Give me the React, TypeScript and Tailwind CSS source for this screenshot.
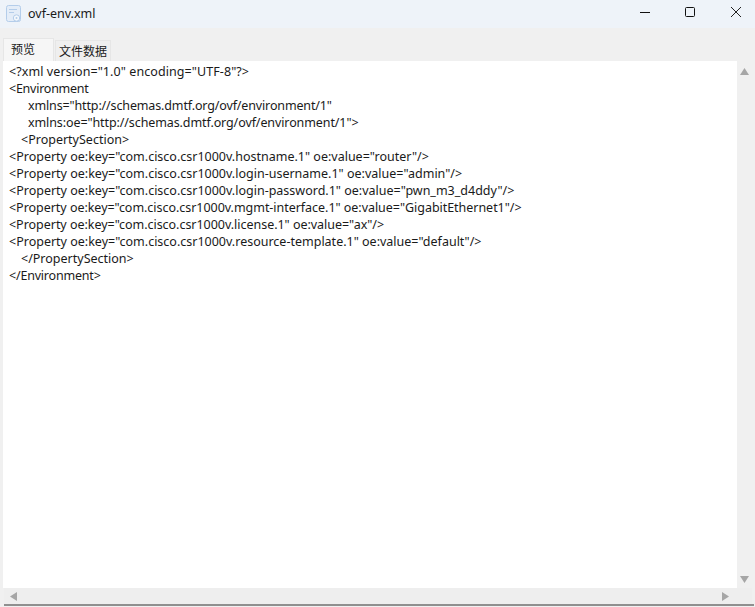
import React from "react";

const lines: [string, string][] = [
  ["tracking-[0.08px]", '<?xml version="1.0" encoding="UTF-8"?>'],
  ["tracking-[-0.25px]", "<Environment"],
  ["pl-[19px] tracking-[-0.14px]", 'xmlns="http://schemas.dmtf.org/ovf/environment/1"'],
  ["pl-[19px] tracking-[-0.1px]", 'xmlns:oe="http://schemas.dmtf.org/ovf/environment/1">'],
  ["pl-[12px]", "<PropertySection>"],
  ["", '<Property oe:key="com.cisco.csr1000v.hostname.1" oe:value="router"/>'],
  ["", '<Property oe:key="com.cisco.csr1000v.login-username.1" oe:value="admin"/>'],
  ["", '<Property oe:key="com.cisco.csr1000v.login-password.1" oe:value="pwn_m3_d4ddy"/>'],
  ["tracking-[-0.035px]", '<Property oe:key="com.cisco.csr1000v.mgmt-interface.1" oe:value="GigabitEthernet1"/>'],
  ["tracking-[-0.03px]", '<Property oe:key="com.cisco.csr1000v.license.1" oe:value="ax"/>'],
  ["", '<Property oe:key="com.cisco.csr1000v.resource-template.1" oe:value="default"/>'],
  ["pl-[12px]", "</PropertySection>"],
  ["tracking-[-0.2px]", "</Environment>"],
];

export default function App() {
  return (
    <div className="w-[755px] h-[607px] flex flex-col overflow-hidden bg-[#f0f0f0] text-[#1a1a1a] font-['Noto_Sans','Noto_Sans_CJK_SC',sans-serif]">
      <div className="h-[28px] shrink-0 bg-[#eef3f9] flex items-center">
        <svg width="18" height="20" viewBox="0 0 18 20" className="ml-[5px]" fill="none">
          <rect x="1.500" y="1.500" width="14" height="16" rx="2" fill="#e4edf8" stroke="#b4cdea" />
          <path d="M4 5.500h8M4 8.500h5" stroke="#b4cdea" />
          <circle cx="11.500" cy="14" r="3.200" fill="#f4f8fc" stroke="#b4cdea" />
          <circle cx="11.500" cy="14" r="1" fill="#b4cdea" />
        </svg>
        <span className="ml-[5px] text-[12.5px] leading-none">ovf-env.xml</span>
        <div className="ml-auto self-start flex pt-[6px] pr-[13px]">
          <svg width="12" height="12" viewBox="0 0 12 12" className="mr-[33px]"><path d="M1 6.500h10" stroke="#111" /></svg>
          <svg width="12" height="12" viewBox="0 0 12 12" className="mr-[34px]"><rect x="1.500" y="1.500" width="9" height="9" rx="1" fill="none" stroke="#111" /></svg>
          <svg width="12" height="12" viewBox="0 0 12 12"><path d="M1 1l10 10M11 1L1 11" stroke="#222" /></svg>
        </div>
      </div>
      <div className="h-[33px] shrink-0 flex items-end pl-[3px] text-[12px]">
        <div className="w-[51px] h-[23px] bg-[#f6f6f6] border border-b-0 border-[#e6e6e6] flex items-center pl-[7px]">预览</div>
        <div className="w-[56px] h-[21px] ml-[1px] bg-[#efefef] border border-b-0 border-[#e6e6e6] flex items-center pl-[3px] pt-[1px]">文件数据</div>
      </div>
      <div className="h-[527px] shrink-0 ml-[3px] mr-[3px] flex">
        <div className="flex-1 bg-white pl-[6px] pt-[2px] text-[12.5px] leading-[17px] whitespace-pre">
          {lines.map(([c, t], i) => (
            <div key={i} className={c}>{t}</div>
          ))}
        </div>
        <div className="w-[15px] flex flex-col items-center justify-between pt-[7px] pb-[5px]">
          <svg width="9" height="7" viewBox="0 0 9 7"><path d="M4.500 0L9 7H0z" fill="#a6a6a6" /></svg>
          <svg width="9" height="7" viewBox="0 0 9 7"><path d="M0 0h9L4.500 7z" fill="#a6a6a6" /></svg>
        </div>
      </div>
      <div className="h-[16px] shrink-0 ml-[4px] mr-[3px] flex items-center justify-between pl-[6px] pr-[23px] bg-[#eeeeee]">
        <svg width="7" height="9" viewBox="0 0 7 9"><path d="M0 4.500L7 0v9z" fill="#a6a6a6" /></svg>
        <svg width="7" height="9" viewBox="0 0 7 9"><path d="M7 4.500L0 0v9z" fill="#a6a6a6" /></svg>
      </div>
      <div className="h-[2px] shrink-0 ml-[4px] mr-[1px] bg-[#8f8f8f]" />
      <div className="flex-1" />
    </div>
  );
}
